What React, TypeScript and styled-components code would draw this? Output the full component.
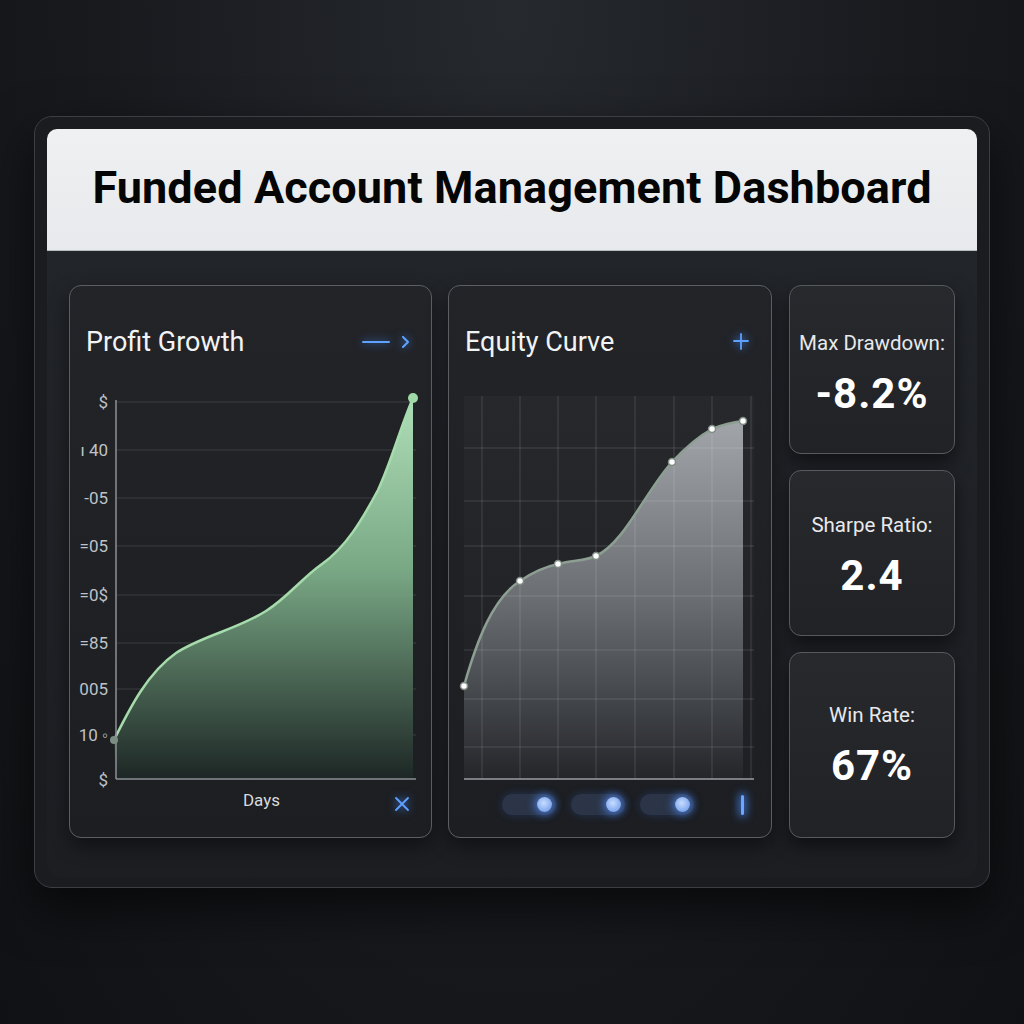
import styled, { createGlobalStyle } from "styled-components";

const GlobalStyle = createGlobalStyle`
  html, body {
    margin: 0;
    padding: 0;
    background: radial-gradient(ellipse at 50% 0%, #26292e 0%, #181a1e 55%, #0f1114 100%);
    min-height: 100vh;
    font-family: Roboto, "Liberation Sans", sans-serif;
  }
`;

const Page = styled.div`
  width: 1024px;
  height: 1024px;
  padding: 116px 0 0 34px;
  box-sizing: border-box;
`;

const Frame = styled.div`
  width: 956px;
  height: 772px;
  box-sizing: border-box;
  padding: 12px 12px 0 12px;
  border: 1.5px solid #3b3e43;
  border-radius: 18px;
  background: #1a1c20;
  box-shadow: 0 20px 50px rgba(0, 0, 0, 0.6);
`;

const Inner = styled.div`
  height: 748px;
  background: linear-gradient(180deg, #23262b 0%, #1c1e22 100%);
  border-radius: 10px 10px 14px 14px;
  overflow: hidden;
`;

const Header = styled.header`
  height: 122px;
  background: linear-gradient(180deg, #eef0f2 0%, #e7e9ec 100%);
  border-bottom: 1px solid #b8bbbf;
  display: flex;
  align-items: center;
  justify-content: center;
  box-sizing: border-box;
  padding-bottom: 4px;
`;

const Title = styled.h1`
  margin: 0;
  font-size: 45px;
  font-weight: 700;
  color: #050505;
  letter-spacing: 0.1px;
`;

const Body = styled.div`
  display: flex;
  padding: 34px 22px 0 22px;
  height: 553px;
`;

const Card = styled.section<{ $width: number }>`
  width: ${(p) => p.$width}px;
  flex-shrink: 0;
  box-sizing: border-box;
  border: 1.5px solid #5b5e63;
  border-radius: 12px;
  background: linear-gradient(180deg, #222428 0%, #1c1e22 100%);
  box-shadow: 0 8px 20px rgba(0, 0, 0, 0.45);
  display: flex;
  flex-direction: column;
  margin-right: ${(p) => (p.$width > 340 ? 16 : 17)}px;
`;

const CardHead = styled.div<{ $right: number }>`
  display: flex;
  align-items: center;
  justify-content: space-between;
  height: 30px;
  padding: 41px ${(p) => p.$right}px 0 16px;
`;

const CardTitle = styled.h2`
  margin: 0;
  font-size: 27px;
  font-weight: 400;
  color: #f2f3f4;
`;

const GlowIcon = styled.svg`
  filter: drop-shadow(0 0 4px rgba(70, 140, 255, 0.9));
  overflow: visible;
`;

const ChartSvg = styled.svg`
  display: block;
  margin-top: 21px;
`;

const Footer = styled.div`
  position: relative;
  display: flex;
  align-items: center;
  justify-content: center;
  height: 20px;
`;

const AxisName = styled.span`
  font-size: 17px;
  color: #d8dadd;
  margin-left: 22px;
`;

const CornerIcon = styled(GlowIcon)`
  position: absolute;
  right: 22px;
  top: 7px;
`;

const ToggleRow = styled.div`
  display: flex;
  align-items: center;
  gap: 15px;
  padding: 4px 0 0 53px;
`;

const Toggle = styled.div`
  width: 54px;
  height: 21px;
  border-radius: 11px;
  background: #2b3547;
  display: flex;
  align-items: center;
  justify-content: flex-end;
  padding-right: 4px;
  box-sizing: border-box;
  box-shadow: 0 0 8px rgba(60, 120, 230, 0.25);
`;

const Knob = styled.div`
  width: 15px;
  height: 15px;
  border-radius: 50%;
  background: radial-gradient(circle at 45% 40%, #c8dcff 0%, #7fa8ee 70%);
  box-shadow: 0 0 8px 2px rgba(80, 140, 255, 0.8);
`;

const Bar = styled.div`
  width: 2.5px;
  height: 20px;
  margin-left: 32px;
  border-radius: 2px;
  background: #6aa8ff;
  box-shadow: 0 0 8px 2px rgba(70, 140, 255, 0.8);
`;

const StatsColumn = styled.div`
  width: 166px;
  display: flex;
  flex-direction: column;
  gap: 16px;
`;

const StatCard = styled.div<{ $h: number; $shift: number }>`
  height: ${(p) => p.$h}px;
  box-sizing: border-box;
  border: 1.5px solid #56595e;
  border-radius: 12px;
  background: linear-gradient(180deg, #27292d 0%, #202226 100%);
  box-shadow: 0 8px 18px rgba(0, 0, 0, 0.5);
  display: flex;
  flex-direction: column;
  align-items: center;
  justify-content: center;
  gap: 17px;
  padding-top: ${(p) => p.$shift}px;
`;

const StatLabel = styled.div`
  font-size: 20.5px;
  line-height: 24px;
  color: #e8e9eb;
`;

const StatValue = styled.div`
  font-size: 42px;
  line-height: 44px;
  font-weight: 700;
  color: #ffffff;
  letter-spacing: 1px;
`;

const profitGrid = [404, 452, 500, 548, 597, 645, 691, 737];
const profitLabels: [number, string][] = [
  [404, "$"],
  [452, "ı 40"],
  [500, "-05"],
  [548, "=05"],
  [597, "=0$"],
  [645, "=85"],
  [691, "005"],
  [737, "10 ◦"],
  [782, "$"],
];

const profitPath =
  "M114 742 C128 714 146 676 176 655 C204 637 236 632 266 613 C288 599 302 580 322 566 C346 549 362 522 378 492 C392 462 400 430 413 400";

const eqV = [483, 521, 559, 597, 636, 675, 713, 752];
const eqH = [450, 503, 548, 598, 652, 701, 749];
const eqPoints: [number, number][] = [
  [465, 688],
  [521, 583],
  [559, 566],
  [597, 558],
  [673, 464],
  [713, 431],
  [744, 423],
];
const eqPath =
  "M465 688 C478 642 494 600 521 583 C534 574 545 569 559 566 C574 562 586 563 597 558 C626 544 646 494 673 464 C686 450 700 438 713 431 C725 426 735 424 744 423";

const stats = [
  { label: "Max Drawdown:", value: "-8.2%", h: 169, shift: 8 },
  { label: "Sharpe Ratio:", value: "2.4", h: 166, shift: 4 },
  { label: "Win Rate:", value: "67%", h: 186, shift: 0 },
];

function ProfitChart() {
  return (
    <ChartSvg width={360} height={412} viewBox="70 380 360 412">
      <defs>
        <linearGradient id="pg" x1="0" y1="400" x2="0" y2="781" gradientUnits="userSpaceOnUse">
          <stop offset="0" stopColor="#b6e8bf" />
          <stop offset="0.45" stopColor="#7eaf8a" />
          <stop offset="1" stopColor="#1d2725" />
        </linearGradient>
      </defs>
      {profitGrid.map((y) => (
        <line key={y} x1={116} x2={416} y1={y} y2={y} stroke="rgba(255,255,255,0.13)" strokeWidth={1} />
      ))}
      <path d={`${profitPath} L413 781 L116 781 Z`} fill="url(#pg)" opacity={0.95} />
      <path d={profitPath} fill="none" stroke="#a6dcac" strokeWidth={2.5} />
      <line x1={116} x2={116} y1={402} y2={781} stroke="#8d9196" strokeWidth={1.5} />
      <line x1={116} x2={416} y1={781} y2={781} stroke="#8d9196" strokeWidth={1.5} />
      {profitLabels.map(([y, t]) => (
        <text
          key={y}
          x={108}
          y={y + 6}
          textAnchor="end"
          fontSize={17}
          fill="#bfc2c6"
          fontFamily="Roboto, 'Liberation Sans', sans-serif"
        >
          {t}
        </text>
      ))}
      <circle cx={114} cy={742} r={4} fill="#7d8d83" />
      <circle cx={413} cy={400} r={5} fill="#9fd9a7" />
    </ChartSvg>
  );
}

function EquityChart() {
  return (
    <ChartSvg width={321} height={412} viewBox="450 380 321 412">
      <defs>
        <linearGradient id="eg" x1="0" y1="420" x2="0" y2="781" gradientUnits="userSpaceOnUse">
          <stop offset="0" stopColor="#a9adb1" />
          <stop offset="0.5" stopColor="#6e7277" />
          <stop offset="1" stopColor="#24262a" />
        </linearGradient>
        <linearGradient id="ebg" x1="0" y1="398" x2="0" y2="781" gradientUnits="userSpaceOnUse">
          <stop offset="0" stopColor="#26282c" />
          <stop offset="1" stopColor="#1e2024" />
        </linearGradient>
      </defs>
      <rect x={465} y={398} width={290} height={383} fill="url(#ebg)" />
      <path d={`${eqPath} L744 781 L465 781 Z`} fill="url(#eg)" opacity={0.95} />
      {eqV.map((x) => (
        <line key={x} x1={x} x2={x} y1={398} y2={781} stroke="rgba(255,255,255,0.14)" strokeWidth={1} />
      ))}
      {eqH.map((y) => (
        <line key={y} x1={465} x2={755} y1={y} y2={y} stroke="rgba(255,255,255,0.14)" strokeWidth={1} />
      ))}
      <line x1={465} x2={755} y1={781} y2={781} stroke="#9a9ea3" strokeWidth={1.5} />
      <path d={eqPath} fill="none" stroke="#8d9e93" strokeWidth={2.5} />
      {eqPoints.map(([x, y]) => (
        <circle key={x} cx={x} cy={y} r={3.5} fill="#ffffff" stroke="#7f8c84" strokeWidth={1.5} />
      ))}
    </ChartSvg>
  );
}

export default function App() {
  return (
    <>
      <GlobalStyle />
      <Page>
        <Frame>
          <Inner>
            <Header>
              <Title>Funded Account Management Dashboard</Title>
            </Header>
            <Body>
              <Card $width={363}>
                <CardHead $right={21}>
                  <CardTitle>Profit Growth</CardTitle>
                  <GlowIcon width={48} height={16} viewBox="0 0 48 16">
                    <line x1={1} y1={8} x2={27} y2={8} stroke="#5ea2ff" strokeWidth={2} strokeLinecap="round" />
                    <polyline points="41,3 46,8 41,13" fill="none" stroke="#5ea2ff" strokeWidth={2} strokeLinecap="round" strokeLinejoin="round" />
                  </GlowIcon>
                </CardHead>
                <ProfitChart />
                <Footer>
                  <AxisName>Days</AxisName>
                  <CornerIcon width={14} height={14} viewBox="0 0 14 14">
                    <path d="M1 1 L13 13 M13 1 L1 13" stroke="#5ea2ff" strokeWidth={1.8} strokeLinecap="round" />
                  </CornerIcon>
                </Footer>
              </Card>
              <Card $width={324}>
                <CardHead $right={22}>
                  <CardTitle>Equity Curve</CardTitle>
                  <GlowIcon width={16} height={18} viewBox="0 0 16 18">
                    <path d="M8 1 L8 16 M1 8 L15 8" stroke="#5ea2ff" strokeWidth={1.8} strokeLinecap="round" />
                  </GlowIcon>
                </CardHead>
                <EquityChart />
                <ToggleRow>
                  <Toggle><Knob /></Toggle>
                  <Toggle><Knob /></Toggle>
                  <Toggle><Knob /></Toggle>
                  <Bar />
                </ToggleRow>
              </Card>
              <StatsColumn>
                {stats.map((s) => (
                  <StatCard key={s.label} $h={s.h} $shift={s.shift}>
                    <StatLabel>{s.label}</StatLabel>
                    <StatValue>{s.value}</StatValue>
                  </StatCard>
                ))}
              </StatsColumn>
            </Body>
          </Inner>
        </Frame>
      </Page>
    </>
  );
}
